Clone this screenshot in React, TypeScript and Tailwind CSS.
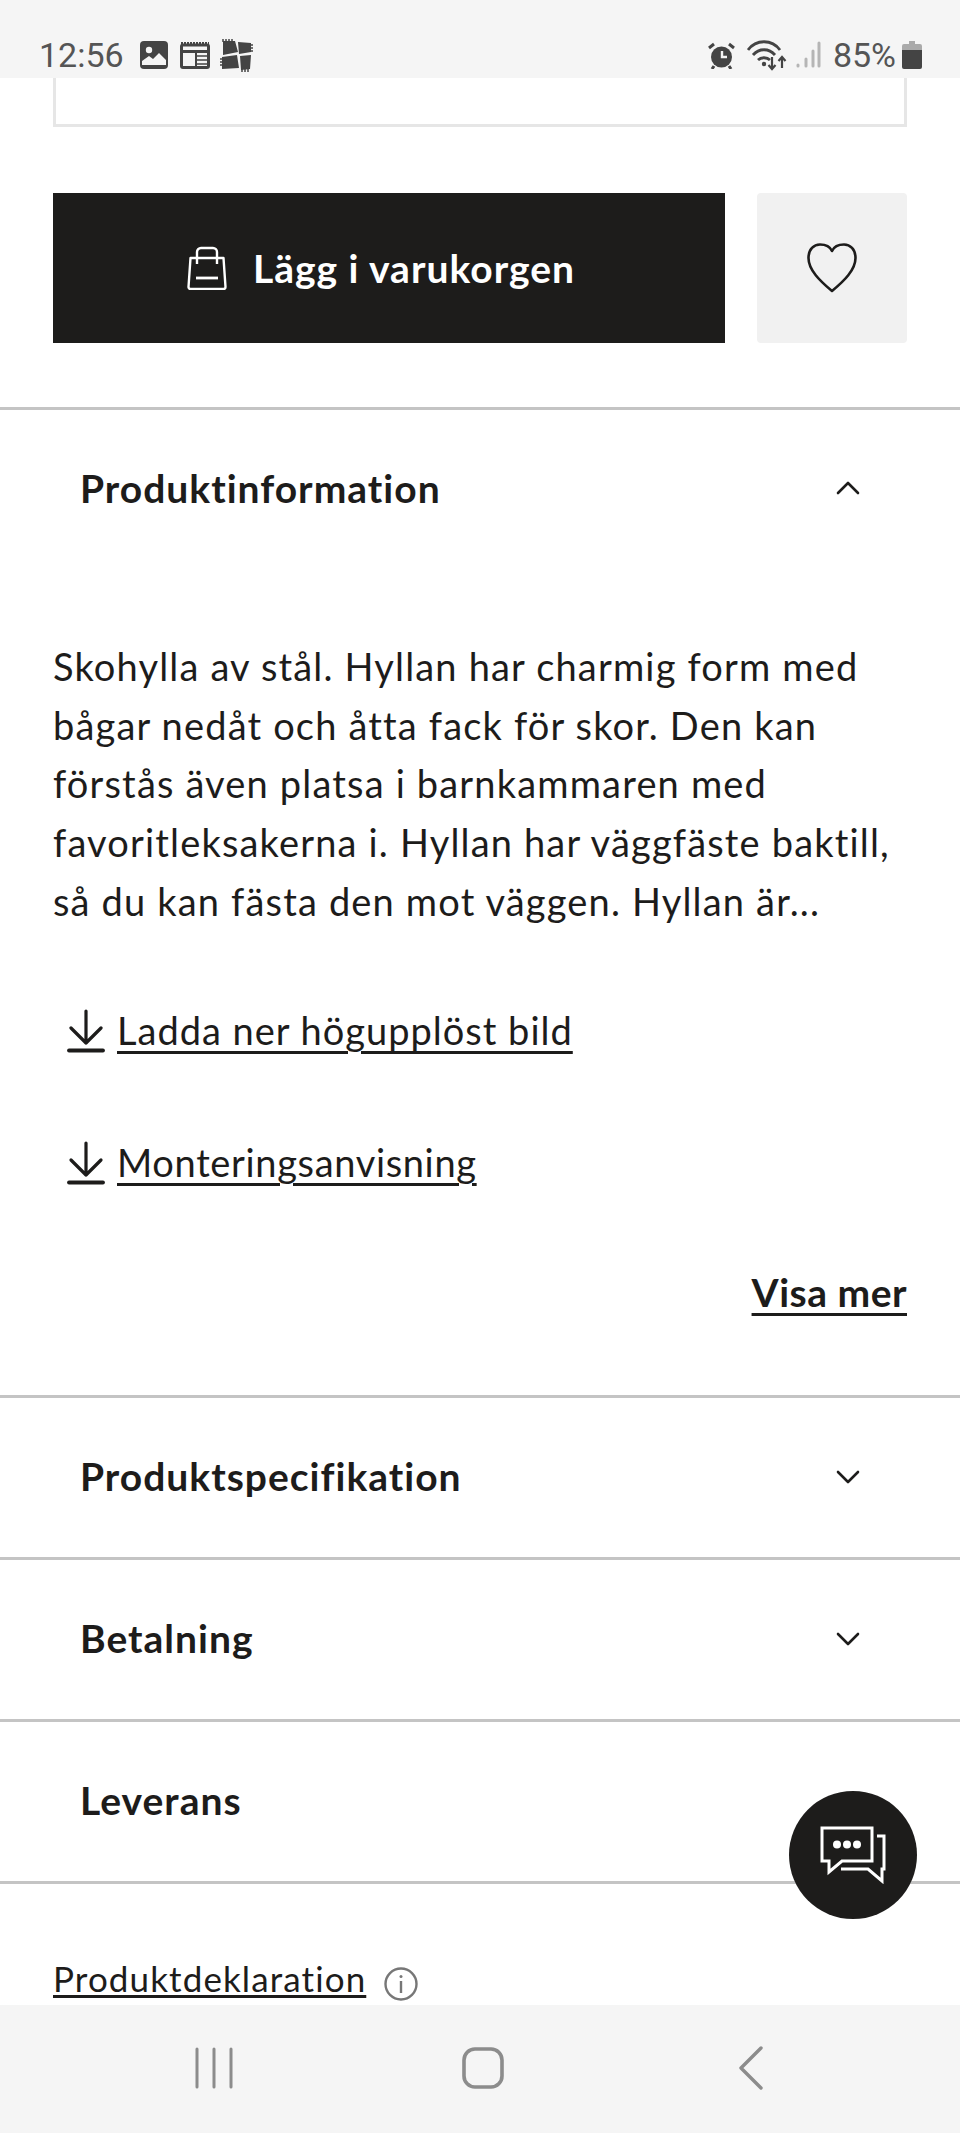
import React from "react";

const Down = () => (
  <svg width="40" height="44" viewBox="0 0 40 44" fill="none" stroke="#1d1c1b" strokeLinecap="round" strokeLinejoin="round" className="shrink-0">
    <path d="M20 2v32M5 19l15 15 15-15" strokeWidth="3.200" />
    <path d="M3 41.500h34" strokeWidth="3.800" />
  </svg>
);

const Chevron = ({ up }: { up?: boolean }) => (
  <svg width="26" height="16" viewBox="0 0 26 16" fill="none" stroke="#1d1c1b" strokeWidth="2.600" strokeLinecap="round" strokeLinejoin="round">
    <path d={up ? "M3 13L13 3l10 10" : "M3 3l10 10L23 3"} />
  </svg>
);

const Section = ({ title, chevron = true }: { title: string; chevron?: boolean }) => (
  <div className="h-[162px] border-b-[3px] border-[#c4c4c4] flex items-center justify-between pl-[80px] pr-[99px] pb-[2px] shrink-0">
    <span className="text-[39px] font-bold tracking-[1px] text-[#1d1c1b]">{title}</span>
    {chevron && <Chevron />}
  </div>
);

export default function App() {
  return (
    <div className="relative w-[960px] h-[2133px] overflow-hidden bg-white flex flex-col font-['Lato','Noto_Sans',sans-serif] text-[#1d1c1b]">
      <div className="h-[78px] shrink-0 bg-[#f5f5f5] flex items-center justify-between pl-[39px] pr-[38px] pt-[32px] text-[#555555] font-['Roboto',sans-serif]">
        <div className="flex items-center">
          <span className="text-[34px] leading-none w-[101px]">12:56</span>
          <svg width="28" height="28" viewBox="0 0 28 28">
            <rect width="28" height="28" rx="4" fill="#444" />
            <circle cx="9" cy="9" r="3.200" fill="#f5f5f5" />
            <path d="M2 24v-4l7-5 4 3 6-6 7 7v5z" fill="#f5f5f5" />
          </svg>
          <svg width="30" height="28" viewBox="0 0 30 28" className="ml-[12px]" fill="none" stroke="#444">
            <path d="M1 2.500h28" strokeWidth="3" strokeDasharray="2 1" />
            <rect x="1.500" y="4" width="27" height="22.500" rx="1.500" strokeWidth="3" />
            <path d="M2 10.500h26" strokeWidth="3" />
            <path d="M16 10v16" strokeWidth="2" />
            <path d="M16 15h12M16 19h12M16 23h12" strokeWidth="1.700" />
          </svg>
          <svg width="33" height="33" viewBox="0 0 33 33" className="ml-[10px]">
            <path d="M3 2h12l3 11-15 3zM18 3l13 1v9l-12 2zM2 18l15-2 2 13-17 1zM20 17l11-1-1 14-9 1z" fill="#444" />
            <path d="M3 0v3M6 0v3M9 0v3M12 0v3M0 20h3M0 23h3M0 26h3M22 30v3M25 30v3M28 30v3M30 6h3M30 9h3M30 12h3" stroke="#444" strokeWidth="1.500" />
          </svg>
        </div>
        <div className="flex items-center">
          <svg width="27" height="27" viewBox="0 0 27 27" className="mr-[12px]">
            <circle cx="13.500" cy="15" r="10.500" fill="#444" />
            <path d="M1 6l5-4M26 6l-5-4M6 24l-2 3M21 24l2 3" stroke="#444" strokeWidth="3" />
            <path d="M14 9v6h5" stroke="#f5f5f5" strokeWidth="2.400" fill="none" />
          </svg>
          <svg width="40" height="31" viewBox="0 0 40 31" fill="none" stroke="#444" strokeWidth="2.800">
            <path d="M1 10C9 -1 25 -1 33 10M6 15c6-7 16-7 22 0M11 20c3-3 9-3 12 0" />
            <circle cx="17" cy="24" r="2.200" fill="#444" stroke="none" />
            <path d="M25 17v12M21.500 25l3.500 4 3.500-4M35 28V17M31.500 21l3.500-4 3.500 4" strokeWidth="2.200" />
          </svg>
          <svg width="26" height="28" viewBox="0 0 26 28" className="ml-[8px]" stroke="#b5b5b5" strokeWidth="3" strokeLinecap="round">
            <path d="M3 25v-1M11 25v-7M18 25V10M24 25V2" />
          </svg>
          <span className="text-[34px] leading-none ml-[12px] mr-[6px]">85%</span>
          <svg width="20" height="28" viewBox="0 0 20 28">
            <path d="M7 0h6v3h5a2 2 0 012 2v5H0V5a2 2 0 012-2h5z" fill="#aaa" />
            <path d="M0 9h20v17a2 2 0 01-2 2H2a2 2 0 01-2-2z" fill="#444" />
          </svg>
        </div>
      </div>

      <main className="flex-1 min-h-0 overflow-hidden flex flex-col">
        <div className="mx-[53px] h-[49px] shrink-0 border-[3px] border-t-0 border-[#e6e6e6]" />
        <div className="mx-[53px] mt-[66px] flex gap-[32px] shrink-0">
          <button className="w-[672px] h-[150px] bg-[#1d1c1b] text-white flex items-center justify-center gap-[26px] pr-[16px]">
            <svg width="40" height="44" viewBox="0 0 40 44" fill="none" stroke="#fff" strokeWidth="2.400" strokeLinejoin="round">
              <path d="M3.500 12h33l2 29a2 2 0 01-2 2H3.500a2 2 0 01-2-2z" />
              <path d="M10 18V6a4 4 0 014-4h12a4 4 0 014 4v12" />
              <path d="M9 32h22" strokeWidth="2.800" />
            </svg>
            <span className="text-[39px] font-bold tracking-[1px]">Lägg i varukorgen</span>
          </button>
          <button className="w-[150px] h-[150px] rounded-[4px] bg-[#f1f1f1] flex items-center justify-center">
            <svg width="50" height="50" viewBox="0 0 50 50" fill="none" stroke="#1d1c1b" strokeWidth="2.600" strokeLinejoin="round">
              <path d="M25 48C13 38 1.500 27 1.500 15 1.500 6 7 1.500 13 1.500c5 0 10 2 12 6.500 2-4.500 7-6.500 12-6.500 6 0 11.500 4.500 11.500 13.500 0 12-11.500 23-23.500 33z" />
            </svg>
          </button>
        </div>

        <div className="mt-[64px] border-t-[3px] border-[#c4c4c4] shrink-0">
          <div className="h-[158px] flex items-center justify-between pl-[80px] pr-[99px] pb-[2px]">
            <span className="text-[39px] font-bold tracking-[1px]">Produktinformation</span>
            <Chevron up />
          </div>
        </div>

        <div className="px-[53px] pt-[69px] shrink-0">
          <p className="text-[38px] leading-[58.700px] tracking-[1.170px] whitespace-nowrap">
            Skohylla av stål. Hyllan har charmig form med
            <br />
            bågar nedåt och åtta fack för skor. Den kan
            <br />
            förstås även platsa i barnkammaren med
            <br />
            favoritleksakerna i. Hyllan har väggfäste baktill,
            <br />
            så du kan fästa den mot väggen. Hyllan är...
          </p>
          <div className="mt-[78px] flex flex-col gap-[88px] pl-[13px]">
            <a className="flex items-center gap-[11px] h-[44px] text-[38px] underline underline-offset-[6px] decoration-[3px] tracking-[1px]">
              <Down />
              <span>Ladda ner högupplöst bild</span>
            </a>
            <a className="flex items-center gap-[11px] h-[44px] text-[38px] underline underline-offset-[6px] decoration-[3px] tracking-[0.650px]">
              <Down />
              <span>Monteringsanvisning</span>
            </a>
          </div>
          <div className="mt-[78px] text-right">
            <a className="text-[39px] font-bold underline underline-offset-[6px] decoration-[3px] tracking-[0.5px]">Visa mer</a>
          </div>
        </div>

        <div className="mt-[74px] border-t-[3px] border-[#c4c4c4] shrink-0" />
        <Section title="Produktspecifikation" />
        <Section title="Betalning" />
        <Section title="Leverans" chevron={false} />

        <div className="pl-[53px] pt-[70px] flex items-start gap-[18px] shrink-0">
          <a className="text-[35px] leading-[48px] underline underline-offset-[3px] decoration-[3px] tracking-[1.100px]">Produktdeklaration</a>
          <svg width="34" height="34" viewBox="0 0 34 34" fill="none" stroke="#777" strokeWidth="2.400" className="mt-[13px] shrink-0">
            <circle cx="17" cy="17" r="15.500" />
            <path d="M17 14v12" />
            <circle cx="17" cy="9.500" r="1.500" fill="#777" stroke="none" />
          </svg>
        </div>
      </main>

      <nav className="h-[128px] shrink-0 bg-[#f5f5f5] flex items-center justify-center pb-[2px] pr-[2px]">
        <div className="flex items-center gap-[1px]">
          <svg width="40" height="42" viewBox="0 0 40 42" stroke="#8c8c8c" strokeWidth="3" strokeLinecap="round">
            <path d="M3 2v38M20 2v38M37 2v38" />
          </svg>
          <svg width="42" height="42" viewBox="0 0 42 42" fill="none" stroke="#8c8c8c" strokeWidth="3.600" className="ml-[227px]">
            <rect x="2" y="2" width="38" height="38" rx="11" />
          </svg>
          <svg width="26" height="44" viewBox="0 0 26 44" fill="none" stroke="#8c8c8c" strokeWidth="3.400" strokeLinecap="round" strokeLinejoin="round" className="ml-[233px]">
            <path d="M23 2L3 22l20 20" />
          </svg>
        </div>
      </nav>

      <div className="absolute left-[789px] top-[1791px] w-[128px] h-[128px] rounded-full bg-[#1d1c1b] flex items-center justify-center">
        <svg width="66" height="58" viewBox="0 0 66 58" fill="none" stroke="#fff" strokeWidth="3" strokeLinejoin="miter">
          <path d="M2 2h50v33H22L9 46V35H2z" />
          <path d="M57 10h7v33h-2v12L48 43H21" />
          <circle cx="17" cy="18.500" r="4" fill="#fff" stroke="none" />
          <circle cx="27" cy="18.500" r="4" fill="#fff" stroke="none" />
          <circle cx="37" cy="18.500" r="4" fill="#fff" stroke="none" />
        </svg>
      </div>
    </div>
  );
}
